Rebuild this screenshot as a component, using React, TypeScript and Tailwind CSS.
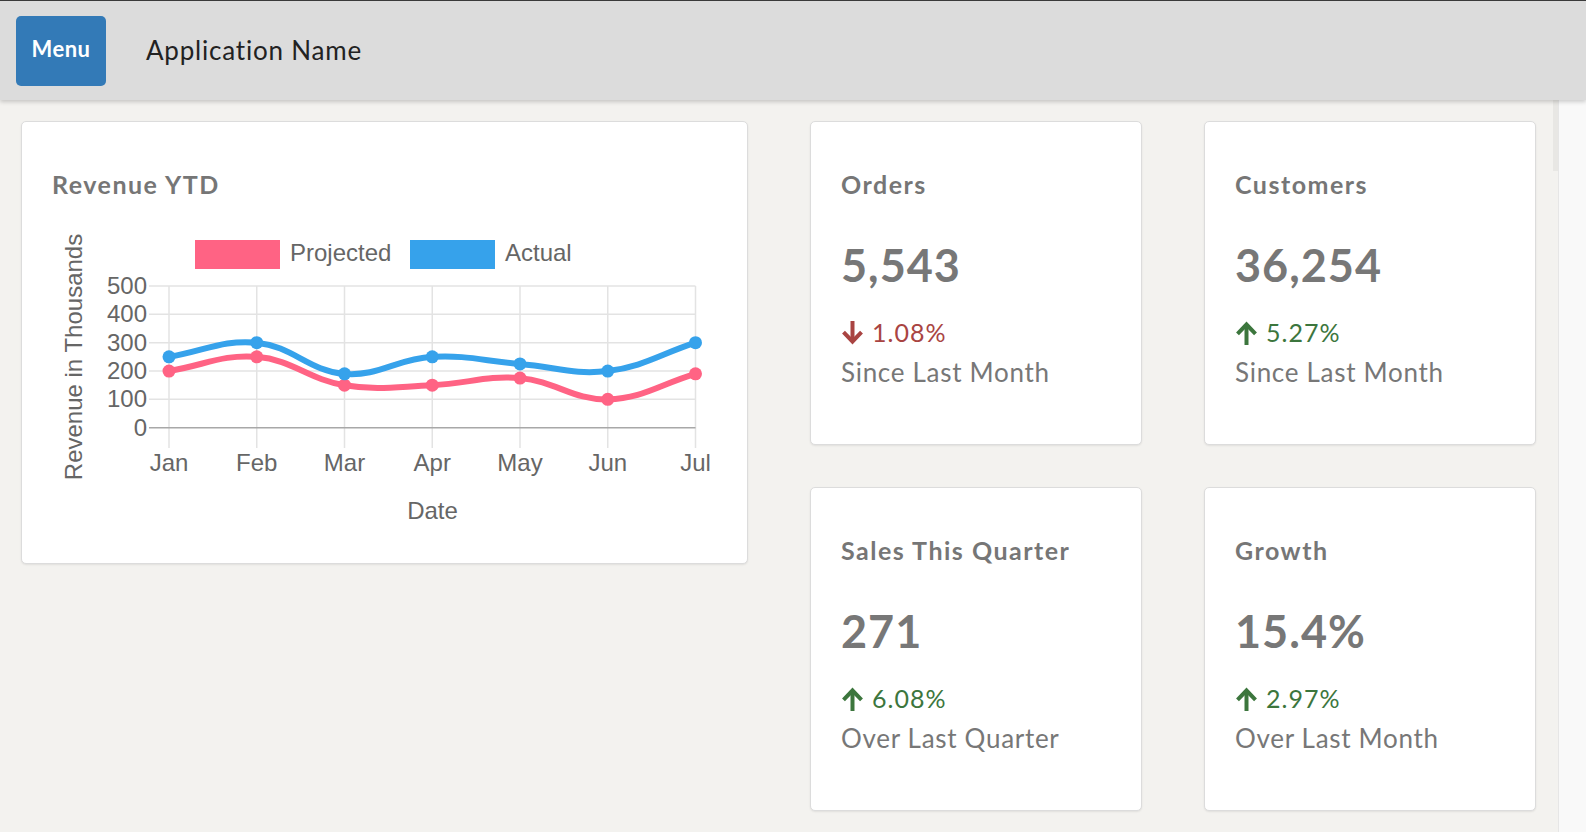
import React from "react";

const months = ["Jan", "Feb", "Mar", "Apr", "May", "Jun", "Jul"];
const projected = [200, 250, 150, 150, 175, 100, 190];
const actual = [250, 300, 190, 250, 225, 200, 300];

const xOf = (i: number) => 169 + i * 87.75;
const yOf = (v: number) => 427.7 - v * 0.28334;

type Pt = { x: number; y: number };

// same curve chart.js draws with lineTension 0.4
function splinePath(values: number[]) {
  const pts: Pt[] = values.map((v, i) => ({ x: xOf(i), y: yOf(v) }));
  const t = 0.4;
  const ctrl = pts.map((cur, i) => {
    const prev = pts[i - 1] || cur;
    const next = pts[i + 1] || cur;
    const d01 = Math.hypot(cur.x - prev.x, cur.y - prev.y);
    const d12 = Math.hypot(next.x - cur.x, next.y - cur.y);
    const s01 = d01 / (d01 + d12) || 0;
    const s12 = d12 / (d01 + d12) || 0;
    return {
      prev: { x: cur.x - t * s01 * (next.x - prev.x), y: cur.y - t * s01 * (next.y - prev.y) },
      next: { x: cur.x + t * s12 * (next.x - prev.x), y: cur.y + t * s12 * (next.y - prev.y) },
    };
  });
  let d = `M${pts[0].x},${pts[0].y}`;
  for (let i = 0; i < pts.length - 1; i++) {
    const a = ctrl[i].next;
    const b = ctrl[i + 1].prev;
    d += ` C${a.x},${a.y} ${b.x},${b.y} ${pts[i + 1].x},${pts[i + 1].y}`;
  }
  return { d, pts };
}

function RevenueChart() {
  const p = splinePath(projected);
  const a = splinePath(actual);
  const font = { fontFamily: "'Liberation Sans', Arial, sans-serif" };
  return (
    <svg width={665} height={340} viewBox="52 197 665 340" style={font}>
      {/* legend */}
      <rect x={195} y={240} width={85} height={29} fill="#ff6384" />
      <text x={290} y={261} fontSize={24} fill="#666">
        Projected
      </text>
      <rect x={410} y={240} width={85} height={29} fill="#36a2eb" />
      <text x={505} y={261} fontSize={24} fill="#666">
        Actual
      </text>

      {/* y title */}
      <text
        x={0}
        y={0}
        fontSize={24}
        fill="#666"
        textAnchor="middle"
        transform="translate(82 357) rotate(-90)"
      >
        Revenue in Thousands
      </text>

      {/* grid */}
      {[100, 200, 300, 400, 500].map((v) => (
        <line key={v} x1={149} x2={695.5} y1={yOf(v)} y2={yOf(v)} stroke="#e3e3e3" strokeWidth={1.5} />
      ))}
      {months.map((m, i) => (
        <line key={m} x1={xOf(i)} x2={xOf(i)} y1={yOf(500)} y2={448} stroke="#e3e3e3" strokeWidth={1.5} />
      ))}
      <line x1={149} x2={695.5} y1={yOf(0)} y2={yOf(0)} stroke="#a8a8a8" strokeWidth={1.5} />

      {[0, 100, 200, 300, 400, 500].map((v) => (
        <text key={v} x={147} y={yOf(v) + 8} fontSize={24} fill="#666" textAnchor="end">
          {v}
        </text>
      ))}
      {months.map((m, i) => (
        <text key={m} x={xOf(i)} y={471} fontSize={24} fill="#666" textAnchor="middle">
          {m}
        </text>
      ))}
      <text x={432.5} y={519} fontSize={24} fill="#666" textAnchor="middle">
        Date
      </text>

      {/* datasets */}
      <path d={p.d} fill="none" stroke="#ff6384" strokeWidth={6} />
      {p.pts.map((pt, i) => (
        <circle key={i} cx={pt.x} cy={pt.y} r={6.5} fill="#ff6384" />
      ))}
      <path d={a.d} fill="none" stroke="#36a2eb" strokeWidth={6} />
      {a.pts.map((pt, i) => (
        <circle key={i} cx={pt.x} cy={pt.y} r={6.5} fill="#36a2eb" />
      ))}
    </svg>
  );
}

function Arrow({ up, color }: { up: boolean; color: string }) {
  return (
    <svg width={23} height={24} viewBox="0 0 23 24" className={up ? "" : "rotate-180"}>
      <path d="M11.5 4V24" stroke={color} strokeWidth={4} fill="none" />
      <path d="M2.5 12.8L11.5 3.5L20.5 12.8" stroke={color} strokeWidth={4} fill="none" />
    </svg>
  );
}

type Stat = {
  title: string;
  value: string;
  change: string;
  up: boolean;
  note: string;
};

const stats: Stat[] = [
  { title: "Orders", value: "5,543", change: "1.08%", up: false, note: "Since Last Month" },
  { title: "Customers", value: "36,254", change: "5.27%", up: true, note: "Since Last Month" },
  { title: "Sales This Quarter", value: "271", change: "6.08%", up: true, note: "Over Last Quarter" },
  { title: "Growth", value: "15.4%", change: "2.97%", up: true, note: "Over Last Month" },
];

function StatCard({ s }: { s: Stat }) {
  const color = s.up ? "#3c763d" : "#a94442";
  return (
    <div className="h-[324px] w-[332px] rounded-[5px] border border-[#dcdcdc] bg-white px-[30px] pt-[50px] shadow-[0_1px_2px_rgba(0,0,0,0.08)]">
      <div className="text-[25px] leading-none font-bold tracking-[1.5px] text-[#767676]">{s.title}</div>
      <div className="mt-[46px] text-[45px] leading-none font-bold tracking-[1px] text-[#777]">{s.value}</div>
      <div className="mt-[32px] flex items-center gap-[8px] text-[25px] leading-none tracking-[1px]" style={{ color }}>
        <Arrow up={s.up} color={color} />
        <span>{s.change}</span>
      </div>
      <div className="mt-[14px] text-[26px] leading-none tracking-[0.7px] text-[#777]">{s.note}</div>
    </div>
  );
}

export default function App() {
  return (
    <div
      className="flex h-[832px] w-full flex-col overflow-hidden bg-[#f3f2ef]"
      style={{ fontFamily: "Lato, 'Liberation Sans', sans-serif" }}
    >
      <header className="relative z-10 flex h-[100px] shrink-0 items-center border-t border-[#3a3a3a] bg-[#dcdcdc] pl-[16px] shadow-[0_2px_4px_rgba(0,0,0,0.18)]">
        <button className="flex h-[70px] w-[90px] items-center justify-center rounded-[5px] bg-[#337ab7] pb-[5px] text-[22px] font-bold tracking-[0.5px] text-white">
          Menu
        </button>
        <span className="ml-[40px] text-[26px] tracking-[0.8px] text-[#222]">Application Name</span>
      </header>

      <div className="flex flex-1">
        <main className="relative flex flex-1 gap-[62px] pl-[21px] pt-[21px]">
          <div className="h-[443px] w-[727px] rounded-[5px] border border-[#dcdcdc] bg-white px-[30px] pt-[50px] shadow-[0_1px_2px_rgba(0,0,0,0.08)]">
            <div className="text-[25px] leading-none font-bold tracking-[1.5px] text-[#767676]">Revenue YTD</div>
            <RevenueChart />
          </div>

          <div className="grid grid-cols-[332px_332px] content-start gap-x-[62px] gap-y-[42px]">
            {stats.map((s) => (
              <StatCard key={s.title} s={s} />
            ))}
          </div>

          <div className="absolute right-0 top-0 h-[71px] w-[5px] bg-[#e8e7e4]" />
        </main>
        <aside className="w-[28px] shrink-0 border-l border-[#e6e6e6] bg-[#f9f9f9]" />
      </div>
    </div>
  );
}
